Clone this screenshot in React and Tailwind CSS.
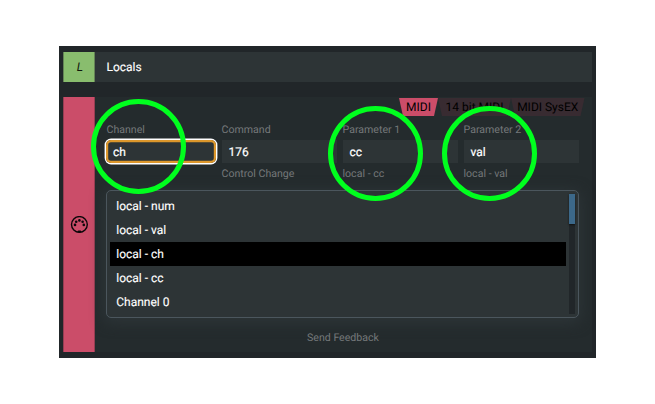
const fields = [
  { label: 'Channel', value: 'ch', hint: '', width: 'w-[109px]', focused: true },
  { label: 'Command', value: '176', hint: 'Control Change', width: 'w-[115px]' },
  { label: 'Parameter 1', value: 'cc', hint: 'local - cc', width: 'w-[115px]' },
  { label: 'Parameter 2', value: 'val', hint: 'local - val', width: 'w-[115px]' },
];

const options = ['local - num', 'local - val', 'local - ch', 'local - cc', 'Channel 0'];

function MidiIcon() {
  return (
    <svg width="18" height="18" viewBox="0 0 18 18" fill="#0c0709">
      <circle cx="9.4" cy="8.5" r="7.9" fill="none" stroke="#0c0709" strokeWidth="1.4" />
      <circle cx="5" cy="8.9" r="1.3" />
      <circle cx="6.2" cy="5.8" r="1.3" />
      <circle cx="9.4" cy="4.4" r="1.3" />
      <circle cx="12.6" cy="5.8" r="1.3" />
      <circle cx="13.8" cy="8.9" r="1.3" />
      <path d="M7.6 16.4v-.9q0-.9.9-.9h1.8q.9 0 .9.9v.9z" />
    </svg>
  );
}

function Tab({ children, className }) {
  return (
    <div
      className={`flex h-[18px] items-center justify-center whitespace-nowrap text-[12px] leading-[18px] text-black [clip-path:polygon(0_0,100%_0,calc(100%-4px)_100%,4px_100%)] ${className}`}
    >
      {children}
    </div>
  );
}

function Field({ label, value, hint, width, focused }) {
  return (
    <div className={`${width} shrink-0`}>
      <div className="h-[17px] text-[10.6px] leading-[13px] text-[#74787a]">{label}</div>
      <div
        className={`flex h-[23px] items-center bg-[#2d3436] pl-[7px] text-[12px] text-white [-webkit-text-stroke:0.2px_white] ${
          focused ? '-ml-[0.5px] rounded-[5px] shadow-[inset_0_0_0_2.2px_#dc972c,0_0_0_1.4px_#fff]' : ''
        }`}
      >
        {value}
      </div>
      <div className="mt-1 h-[13px] text-[10.6px] leading-[13px] text-[#74787a]">{hint}</div>
    </div>
  );
}

function Ring({ className }) {
  return <div className={`absolute size-[95px] rounded-full border-[5px] border-[#00ff1e] ${className}`} />;
}

export default function App() {
  return (
    <div className="relative h-[404px] w-[655px] overflow-hidden bg-white pl-[59px] pt-[46px] font-[Roboto,sans-serif] [text-rendering:geometricPrecision]">
      <div className="h-[312px] w-[537px] bg-[#212629] px-1 pt-[6px]">
        <div className="flex h-[30px] bg-[#2d3436]">
          <div className="flex w-8 items-center justify-center border-x border-[#658456] bg-[#89bd6e] pl-[2px] text-[12px] italic text-[#10180c]">
            L
          </div>
          <div className="flex items-center pl-[11.5px] text-[12px] text-white [-webkit-text-stroke:0.12px_white]">Locals</div>
        </div>

        <div className="mt-[15px] flex h-[255px] bg-[#242b2d]">
          <div className="flex w-8 items-center justify-center border-x border-[#963e53] bg-[#cb4d69]">
            <MidiIcon />
          </div>
          <div className="flex min-w-0 flex-1 flex-col pl-[11.5px] pt-px">
            <div className="flex justify-end pr-[7.5px]">
              <Tab className="w-[39px] bg-[#cb4d69]">MIDI</Tab>
              <Tab className="w-[73px] bg-[#382b31]">14 bit MIDI</Tab>
              <Tab className="w-[73.5px] bg-[#382b31]">MIDI SysEX</Tab>
            </div>
            <div className="mt-[7px] flex gap-[6px]">
              {fields.map((f) => (
                <Field key={f.label} {...f} />
              ))}
            </div>
            <div className="-ml-[0.25px] mt-[10px] flex h-32 w-[473px] rounded-[5px] border border-[#4b565d] bg-[#2d3436] py-[3px] pl-[3px] pr-[3px] shadow-[0_3px_14px_2px_#2d3538]">
              <div className="w-[456px]">
                {options.map((o) => (
                  <div
                    key={o}
                    className={`flex h-6 items-center pl-[6px] text-[12px] text-white [-webkit-text-stroke:0.12px_white] ${
                      o === 'local - ch' ? 'bg-black' : ''
                    }`}
                  >
                    {o}
                  </div>
                ))}
              </div>
              <div className="ml-[3px] h-[120px] w-[6px] bg-[#212629]">
                <div className="h-[30px] bg-[#3c6889] shadow-[0_1px_2px_#111]" />
              </div>
            </div>
            <div className="mt-[13px] w-[473px] text-center text-[10.6px] leading-[13px] text-[#74787a]">Send Feedback</div>
          </div>
        </div>
      </div>

      <Ring className="left-[91px] top-[99px]" />
      <Ring className="left-[328px] top-[106px]" />
      <Ring className="left-[442px] top-[106px]" />
    </div>
  );
}
